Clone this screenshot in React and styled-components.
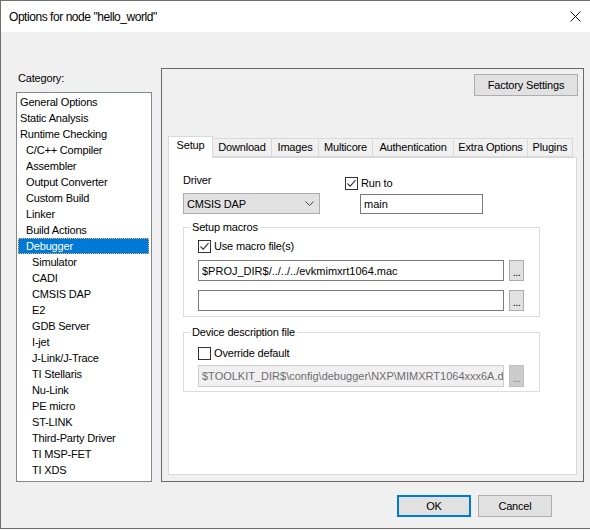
import React from "react";
import styled, { createGlobalStyle } from "styled-components";

const Global = createGlobalStyle`
  html, body { margin: 0; padding: 0; background: #f0f0f0; }
  body { font-family: "Liberation Sans", Arial, sans-serif; font-size: 11px; color: #000; letter-spacing: -0.18px; }
  * { box-sizing: border-box; }
`;

const Window = styled.div`
  width: 590px;
  height: 529px;
  border-left: 1px solid #707070;
  border-top: 1px solid #707070;
  border-bottom: 1px solid #707070;
  display: flex;
  flex-direction: column;
  background: #f0f0f0;
`;

const TitleBar = styled.div`
  height: 31px;
  flex-shrink: 0;
  background: #fff;
  display: flex;
  align-items: center;
  justify-content: space-between;
  padding: 0 9px 0 8px;
`;

const Title = styled.span`
  font-size: 12px;
  letter-spacing: -0.45px;
`;

const Body = styled.div`
  flex: 1;
  display: flex;
  flex-direction: column;
  padding: 36px 6px 0 15px;
`;

const MainRow = styled.div`
  display: flex;
  height: 414px;
`;

const LeftCol = styled.div`
  width: 136px;
  margin-right: 9px;
  display: flex;
  flex-direction: column;
  padding-top: 3px;
`;

const CategoryLabel = styled.div`
  line-height: 14px;
  height: 14px;
  margin-bottom: 7px;
  padding-left: 2px;
`;

const List = styled.div`
  height: 390px;
  border: 1px solid #828790;
  background: #fff;
  padding: 1px 2px 0 1px;
`;

const Item = styled.div`
  height: 16px;
  line-height: 16px;
  padding-left: ${(p) => 2 + p.$level * 6}px;
  white-space: nowrap;
  background: ${(p) => (p.$selected ? "#0078d7" : "transparent")};
  color: ${(p) => (p.$selected ? "#fff" : "#000")};
  outline: ${(p) => (p.$selected ? "1px dotted #f7b35a" : "none")};
  outline-offset: -1px;
`;

const Panel = styled.div`
  width: 423px;
  border: 1px solid #6a6a6a;
  padding: 5px 5px 6px 6px;
  display: flex;
  flex-direction: column;
`;

const Button = styled.div`
  width: ${(p) => p.$w}px;
  height: 22px;
  background: #e1e1e1;
  border: ${(p) => (p.$default ? "2px solid #0078d7" : "1px solid #adadad")};
  display: flex;
  align-items: center;
  justify-content: center;
  flex-shrink: 0;
`;

const FactoryButton = styled(Button)`
  align-self: flex-end;
`;

const TabArea = styled.div`
  flex: 1;
  margin-top: 40px;
  margin-right: 1px;
  display: flex;
  flex-direction: column;
`;

const TabStrip = styled.div`
  height: 21px;
  display: flex;
  align-items: flex-start;
`;

const Tab = styled.div`
  width: ${(p) => p.$w}px;
  height: ${(p) => (p.$active ? 22 : 19)}px;
  margin-top: ${(p) => (p.$active ? 0 : 2)}px;
  margin-left: ${(p) => (p.$first ? 0 : -1)}px;
  background: ${(p) => (p.$active ? "#fff" : "#f0f0f0")};
  border: 1px solid #d9d9d9;
  border-bottom: ${(p) => (p.$active ? "none" : "1px solid #d9d9d9")};
  position: relative;
  z-index: ${(p) => (p.$active ? 2 : 0)};
  display: flex;
  justify-content: center;
  padding-top: 2px;
  line-height: 13px;
  white-space: nowrap;
`;

const TabPage = styled.div`
  flex: 1;
  background: #fff;
  border: 1px solid #d9d9d9;
  padding: 16px 0 0 14px;
  display: flex;
  flex-direction: column;
  align-items: flex-start;
`;

const TopRow = styled.div`
  display: flex;
`;

const DriverCol = styled.div`
  width: 137px;
  display: flex;
  flex-direction: column;
`;

const FieldLabel = styled.div`
  line-height: 13px;
  height: 13px;
  margin-bottom: 6px;
`;

const Select = styled.div`
  height: 21px;
  background: #e1e1e1;
  border: 1px solid #adadad;
  display: flex;
  align-items: center;
  justify-content: space-between;
  padding: 0 5px 0 3px;
`;

const RunCol = styled.div`
  margin-left: 25px;
  padding-top: 3px;
  display: flex;
  flex-direction: column;
`;

const CheckRow = styled.div`
  display: flex;
  align-items: center;
  gap: 3px;
  height: 13px;
  line-height: 13px;
`;

const Box = styled.span`
  width: 13px;
  height: 13px;
  border: 1px solid #333;
  background: #fff;
  display: inline-flex;
  flex-shrink: 0;
`;

const TextBox = styled.div`
  width: ${(p) => p.$w}px;
  height: ${(p) => p.$h || 21}px;
  margin-left: ${(p) => p.$ml || 0}px;
  margin-top: ${(p) => p.$mt || 0}px;
  border: 1px solid ${(p) => (p.$disabled ? "#cccccc" : "#7a7a7a")};
  background: ${(p) => (p.$disabled ? "#f0f0f0" : "#fff")};
  color: ${(p) => (p.$disabled ? "#6d6d6d" : "#000")};
  display: flex;
  align-items: center;
  padding-left: 3px;
  white-space: nowrap;
  overflow: hidden;
  letter-spacing: 0;
`;

const Group = styled.fieldset`
  width: 357px;
  margin: ${(p) => p.$mt}px 0 0 0;
  border: 1px solid #dcdcdc;
  padding: ${(p) => p.$pt}px 15px ${(p) => p.$pb}px 14px;
  min-width: 0;
`;

const Legend = styled.legend`
  padding: 0 2px;
  margin-left: -8px;
  line-height: 13px;
  height: 13px;
`;

const FileRow = styled.div`
  display: flex;
  gap: 5px;
  margin-top: ${(p) => p.$mt}px;
  height: ${(p) => p.$h}px;
`;

const Browse = styled.div`
  width: 15px;
  height: 100%;
  background: ${(p) => (p.$disabled ? "#cccccc" : "#e1e1e1")};
  border: 1px solid ${(p) => (p.$disabled ? "#bfbfbf" : "#adadad")};
  color: ${(p) => (p.$disabled ? "#838383" : "#000")};
  display: flex;
  align-items: flex-end;
  justify-content: center;
  padding-bottom: 4px;
  line-height: 8px;
  letter-spacing: -0.5px;
`;

const Footer = styled.div`
  margin-top: 13px;
  display: flex;
  justify-content: flex-end;
  gap: 7px;
  padding-right: 32px;
`;

const Check = ({ checked }) => (
  <Box>
    {checked && (
      <svg width="11" height="11" viewBox="0 0 11 11">
        <path d="M1.5 5.5 L4.2 8.2 L9.5 2.2" fill="none" stroke="#333" strokeWidth="1.1" />
      </svg>
    )}
  </Box>
);

const items = [
  ["General Options", 0],
  ["Static Analysis", 0],
  ["Runtime Checking", 0],
  ["C/C++ Compiler", 1],
  ["Assembler", 1],
  ["Output Converter", 1],
  ["Custom Build", 1],
  ["Linker", 1],
  ["Build Actions", 1],
  ["Debugger", 1],
  ["Simulator", 2],
  ["CADI", 2],
  ["CMSIS DAP", 2],
  ["E2", 2],
  ["GDB Server", 2],
  ["I-jet", 2],
  ["J-Link/J-Trace", 2],
  ["TI Stellaris", 2],
  ["Nu-Link", 2],
  ["PE micro", 2],
  ["ST-LINK", 2],
  ["Third-Party Driver", 2],
  ["TI MSP-FET", 2],
  ["TI XDS", 2],
];

const tabs = [
  ["Setup", 45],
  ["Download", 60],
  ["Images", 48],
  ["Multicore", 55],
  ["Authentication", 82],
  ["Extra Options", 75],
  ["Plugins", 46],
];

export default function App() {
  return (
    <>
      <Global />
      <Window>
        <TitleBar>
          <Title>Options for node "hello_world"</Title>
          <svg width="11" height="11" viewBox="0 0 11 11">
            <path d="M0.5 0.5 L10.5 10.5 M10.5 0.5 L0.5 10.5" stroke="#111" strokeWidth="1" />
          </svg>
        </TitleBar>
        <Body>
          <MainRow>
            <LeftCol>
              <CategoryLabel>Category:</CategoryLabel>
              <List>
                {items.map(([t, l]) => (
                  <Item key={t} $level={l} $selected={t === "Debugger"}>
                    {t}
                  </Item>
                ))}
              </List>
            </LeftCol>
            <Panel>
              <FactoryButton $w={104}>Factory Settings</FactoryButton>
              <TabArea>
                <TabStrip>
                  {tabs.map(([t, w], i) => (
                    <Tab key={t} $w={w} $first={i === 0} $active={i === 0}>
                      {t}
                    </Tab>
                  ))}
                </TabStrip>
                <TabPage>
                  <TopRow>
                    <DriverCol>
                      <FieldLabel>Driver</FieldLabel>
                      <Select>
                        <span>CMSIS DAP</span>
                        <svg width="9" height="5" viewBox="0 0 9 5">
                          <path d="M0.5 0.5 L4.5 4.5 L8.5 0.5" fill="none" stroke="#444" strokeWidth="1" />
                        </svg>
                      </Select>
                    </DriverCol>
                    <RunCol>
                      <CheckRow>
                        <Check checked />
                        <span>Run to</span>
                      </CheckRow>
                      <TextBox $w={123} $h={20} $ml={15} $mt={4}>main</TextBox>
                    </RunCol>
                  </TopRow>
                  <Group $mt={7} $pt={6} $pb={5}>
                    <Legend>Setup macros</Legend>
                    <CheckRow>
                      <Check checked />
                      <span>Use macro file(s)</span>
                    </CheckRow>
                    <FileRow $mt={7} $h={21}>
                      <TextBox $w={306}>$PROJ_DIR$/../../../evkmimxrt1064.mac</TextBox>
                      <Browse>...</Browse>
                    </FileRow>
                    <FileRow $mt={9} $h={21}>
                      <TextBox $w={306} />
                      <Browse>...</Browse>
                    </FileRow>
                  </Group>
                  <Group $mt={9} $pt={8} $pb={4}>
                    <Legend>Device description file</Legend>
                    <CheckRow>
                      <Check />
                      <span>Override default</span>
                    </CheckRow>
                    <FileRow $mt={5} $h={22}>
                      <TextBox $w={306} $h={22} $disabled>
                        $TOOLKIT_DIR$\config\debugger\NXP\MIMXRT1064xxx6A.ddf
                      </TextBox>
                      <Browse $disabled>...</Browse>
                    </FileRow>
                  </Group>
                </TabPage>
              </TabArea>
            </Panel>
          </MainRow>
          <Footer>
            <Button $w={74} $default>OK</Button>
            <Button $w={74}>Cancel</Button>
          </Footer>
        </Body>
      </Window>
    </>
  );
}
